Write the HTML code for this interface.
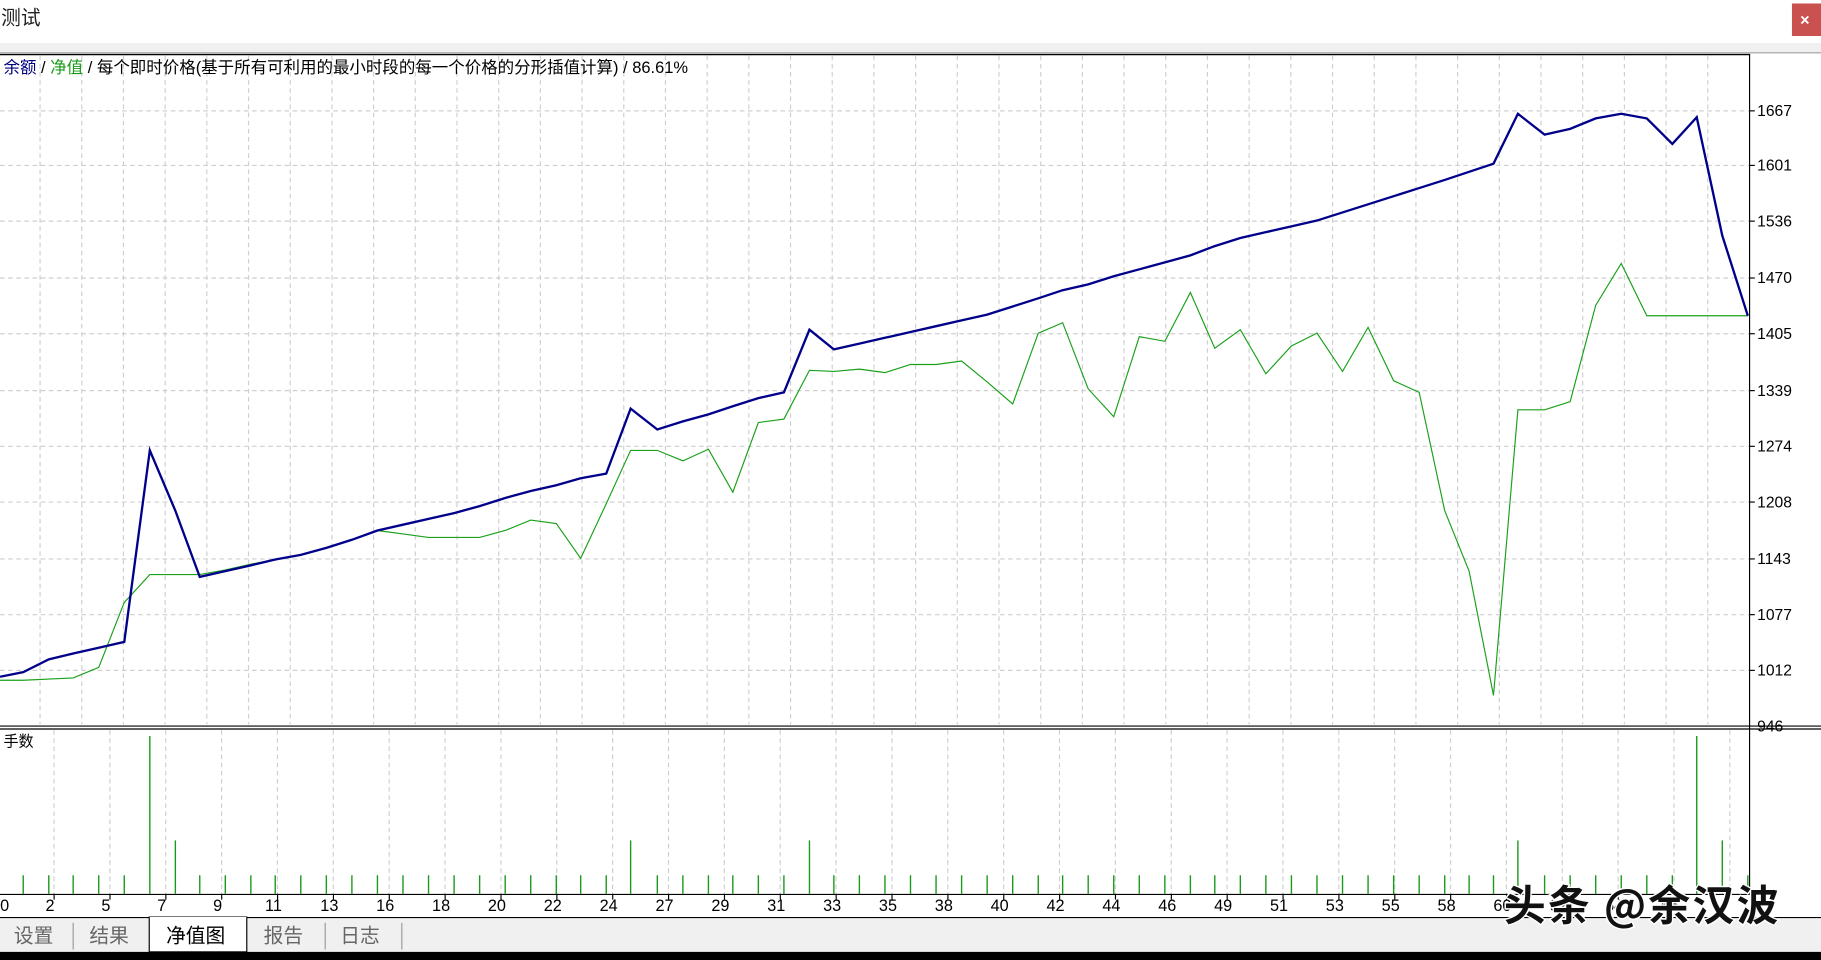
<!DOCTYPE html>
<html><head><meta charset="utf-8"><style>
html,body{margin:0;padding:0;background:#fff;overflow:hidden}
svg{display:block}
text{font-family:"Liberation Sans","Noto Sans CJK SC",sans-serif}
</style></head><body>
<svg id="s" width="1821" height="960" viewBox="0 0 1568 827" preserveAspectRatio="none" xmlns="http://www.w3.org/2000/svg">
<rect width="1568" height="827" fill="#fff"/>
<text x="1" y="21" font-size="17" fill="#222">测试</text>
<rect x="1543" y="3" width="25" height="28" fill="#c9514f"/>
<text x="1550" y="22" font-size="14" fill="#fff" font-weight="bold">×</text>
<rect x="0" y="37" width="1568" height="9" fill="#f0f0f0"/>
<line x1="0" y1="45.5" x2="1568" y2="45.5" stroke="#a0a0a0"/>
<line x1="0" y1="47" x2="1507" y2="47" stroke="#000" stroke-width="1.2"/>
<line x1="1506.5" y1="47" x2="1506.5" y2="770" stroke="#000"/>
<g id="grid" stroke="#cfcfcf" stroke-dasharray="4,3" stroke-width="1"></g>
<text x="3" y="63" font-size="14.2"><tspan fill="#00007f">余额</tspan><tspan fill="#000"> / </tspan><tspan fill="#1a9a1a">净值</tspan><tspan fill="#000"> / 每个即时价格(基于所有可利用的最小时段的每一个价格的分形插值计算) / 86.61%</tspan></text>
<g id="ylab" font-size="13.5" fill="#000"></g>
<polyline fill="none" stroke="#1aa01a" stroke-width="1" points="0,586 20,586 42,585 63,584 85,575 107,519 129,495 151,495 172,495 194,491 216,486 237,482 259,478 281,472 303,465 325,457 347,460 369,463 391,463 413,463 435,457 457,448 479,451 500,481 522,434 543,388 566,388 588,397 610,387 631,424 653,364 675,361 697,319 718,320 740,318 762,321 784,314 806,314 828,311 850,329 872,348 894,287 915,278 937,335 959,359 981,290 1003,294 1025,252 1046,300 1068,284 1090,322 1112,298 1134,287 1156,320 1178,282 1200,328 1222,338 1244,440 1265,492 1286,599 1307,353 1330,353 1352,346 1374,263 1396,227 1418,272 1440,272 1461,272 1483,272 1505,272"/>
<polyline fill="none" stroke="#00008b" stroke-width="2" points="0,583 20,579 42,568 63,563 85,558 107,553 129,388 151,440 172,497 194,492 216,487 237,482 259,478 281,472 303,465 325,457 347,452 369,447 391,442 413,436 435,429 457,423 479,418 500,412 522,408 543,352 566,370 588,363 610,357 631,350 653,343 675,338 697,284 718,301 740,296 762,291 784,286 806,281 828,276 850,271 872,264 894,257 915,250 937,245 959,238 981,232 1003,226 1025,220 1046,212 1068,205 1090,200 1112,195 1134,190 1156,183 1178,176 1200,169 1222,162 1244,155 1265,148 1286,141 1307,98 1330,116 1352,111 1374,102 1396,98 1418,102 1440,124 1461,101 1483,203 1505,272"/>
<line x1="0" y1="625.5" x2="1568" y2="625.5" stroke="#000"/>
<line x1="0" y1="628" x2="1568" y2="628" stroke="#000"/>
<text x="3" y="643" font-size="13" fill="#000">手数</text>
<g id="bars" stroke="#1a9a1a" stroke-width="1.2"></g>
<line x1="0" y1="770.5" x2="1507" y2="770.5" stroke="#000"/>
<g id="xlab" font-size="14" fill="#000" text-anchor="middle"></g>
<line x1="0" y1="790.5" x2="1568" y2="790.5" stroke="#000"/>
<rect x="0" y="791" width="1568" height="29" fill="#f0f0f0"/>
<rect x="128.5" y="790" width="84" height="30" fill="#fff" stroke="#000"/>
<line x1="129" y1="790.5" x2="212" y2="790.5" stroke="#fff"/>
<g font-size="17" fill="#666">
<text x="12" y="812">设置</text><text x="77" y="812">结果</text>
<text x="143" y="812" fill="#000">净值图</text>
<text x="227" y="812">报告</text><text x="293" y="812">日志</text></g>
<g stroke="#999"><line x1="63" y1="795" x2="63" y2="818"/><line x1="280" y1="795" x2="280" y2="818"/><line x1="346" y1="795" x2="346" y2="818"/></g>
<rect x="0" y="820" width="1568" height="7" fill="#000"/>
<text x="1295" y="793" font-size="36" font-weight="bold" fill="#111" stroke="#fff" stroke-width="2.5" paint-order="stroke" letter-spacing="2" style="font-family:'Noto Sans CJK SC',sans-serif">头条 @余汉波</text>
</svg>
<script>
var N="http://www.w3.org/2000/svg";
function el(p,t,a,txt){var e=document.createElementNS(N,t);for(var k in a)e.setAttribute(k,a[k]);if(txt)e.textContent=txt;document.getElementById(p).appendChild(e);}
var ys=[95,142,190,239,287,336,384,432,481,529,577],yl=[1667,1601,1536,1470,1405,1339,1274,1208,1143,1077,1012];
for(var i=0;i<ys.length;i++){el('grid','line',{x1:0,y1:ys[i]+.5,x2:1506,y2:ys[i]+.5});el('ylab','line',{x1:1506,y1:ys[i]+.5,x2:1511,y2:ys[i]+.5,stroke:'#000'});el('ylab','text',{x:1513,y:ys[i]+5},String(yl[i]));}
el('ylab','text',{x:1513,y:630},'946');
for(var x=34.5;x<1506;x+=35.9)el('grid','line',{x1:x,y1:48,x2:x,y2:624});
for(var x=46.5;x<1506;x+=48.1)el('grid','line',{x1:x,y1:629,x2:x,y2:770});
var tall={129:634,151:724,543:724,697:724,1307:724,1461:634,1483:724};
var bx=[20,42,63,85,107,129,151,172,194,216,237,259,281,303,325,347,369,391,413,435,457,479,500,522,543,566,588,610,631,653,675,697,718,740,762,784,806,828,850,872,894,915,937,959,981,1003,1025,1046,1068,1090,1112,1134,1156,1178,1200,1222,1244,1265,1286,1307,1330,1352,1374,1396,1418,1440,1461,1483,1505];
bx.forEach(function(x){el('bars','line',{x1:x,y1:tall[x]||754,x2:x,y2:770});});
var xl=[0,2,5,7,9,11,13,16,18,20,22,24,27,29,31,33,35,38,40,42,44,46,49,51,53,55,58,60,62,64,66];
for(var i=0;i<xl.length;i++){var x=i==0?4:i*48.1-5;el('xlab','text',{x:x,y:785},String(xl[i]));if(i>0)el('xlab','line',{x1:i*48.1-1.5,y1:770,x2:i*48.1-1.5,y2:775,stroke:'#000'});}
</script>
</body></html>
